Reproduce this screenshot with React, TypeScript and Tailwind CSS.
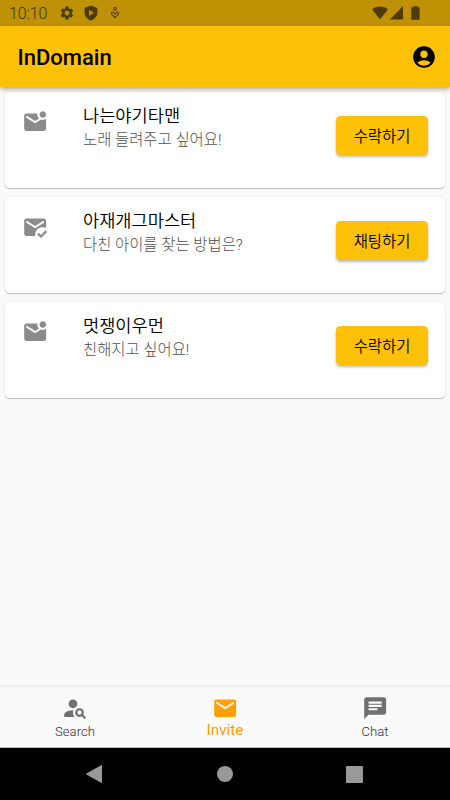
import React from "react";
import {
  MdAccountCircle,
  MdChat,
  MdEmail,
  MdMarkEmailRead,
  MdMarkEmailUnread,
  MdPersonSearch,
  MdSettings,
} from "react-icons/md";

const invites = [
  { name: "나는야기타맨", message: "노래 들려주고 싶어요!", action: "수락하기", read: false },
  { name: "아재개그마스터", message: "다친 아이를 찾는 방법은?", action: "채팅하기", read: true },
  { name: "멋쟁이우먼", message: "친해지고 싶어요!", action: "수락하기", read: false },
];

function StatusBar() {
  return (
    <div className="flex h-[26px] shrink-0 items-center bg-[#bf9105] pl-[9px] pr-[30px] text-[#4d3b05]">
      <span className="w-[39px] whitespace-nowrap pt-[2px] text-[16px] font-light leading-[26px] tracking-[-0.1px] text-[#3d2f04]">10:10</span>
      <MdSettings className="ml-[11px] size-4" />
      <svg className="ml-[9px] h-4 w-[14px]" viewBox="0 0 14 16">
        <path fill="currentColor" fillRule="evenodd" d="M7 .5.6 3v4.500c0 3.700 2.700 6.700 6.400 8 3.700-1.300 6.400-4.300 6.400-8V3L7 .5ZM5 4.700v6L10 7.800 5 4.700Z" />
      </svg>
      <svg className="ml-[12px] h-[14px] w-[10px]" viewBox="0 0 10 14" fill="none" stroke="currentColor" strokeWidth="1.100">
        <circle cx="5" cy="2.800" r="1.300" />
        <path d="M3.200 6.200 5 7.900l1.800-1.700c1.300-.7 2.500.9 1.600 2L5 11.800 1.600 8.200c-.9-1.100.3-2.700 1.600-2Z" />
      </svg>
      <div className="ml-auto flex items-center">
        <svg className="h-[14px] w-4" viewBox="0 0 16 14">
          <path fill="currentColor" d="M8 13.500 0 3.200C4.500-.4 11.500-.4 16 3.200Z" />
        </svg>
        <svg className="ml-[2px] h-[14px] w-[13px]" viewBox="0 0 13 14">
          <path fill="currentColor" d="M13 0v13.500H0Z" />
        </svg>
        <svg className="ml-2 h-[14px] w-[9px]" viewBox="0 0 9 14">
          <path fill="currentColor" d="M2.500 0h4v1.200h1.300c.5 0 .8.300.8.800v11c0 .5-.3.800-.8.800H1.100c-.5 0-.8-.3-.8-.8V2c0-.5.3-.8.8-.8h1.400Z" />
        </svg>
      </div>
    </div>
  );
}

function InviteCard({ name, message, action, read }: (typeof invites)[number]) {
  const Icon = read ? MdMarkEmailRead : MdMarkEmailUnread;
  return (
    <li className="flex h-24 rounded-[4.400px] bg-white pl-[17px] pr-[17px] shadow-[0_1px_1px_rgba(0,0,0,0.22),0_0_2px_rgba(0,0,0,0.10)]">
      <Icon className="mt-[17px] size-[26.300px] shrink-0 text-[#8b8b8b]" />
      <div className="ml-[34.700px] flex-1 whitespace-nowrap pt-3">
        <div className="text-[17.600px] font-[350] leading-6 text-black">{name}</div>
        <div className="text-[15.400px] font-light leading-[24px] text-[#505050]">{message}</div>
      </div>
      <button className="mt-6 h-[39px] w-[92px] rounded-[4.400px] bg-[#ffc107] pt-[3px] text-[15.400px] font-[350] leading-[36px] text-black shadow-[0_2px_3px_rgba(0,0,0,0.28)]">
        {action}
      </button>
    </li>
  );
}

export default function App() {
  return (
    <div className="flex h-[800px] w-[450px] flex-col overflow-hidden bg-[#fafafa] font-['Roboto','Noto_Sans_CJK_KR',sans-serif]">
      <StatusBar />
      <header className="z-10 flex h-[61px] shrink-0 items-center justify-between bg-[#ffc107] pl-[17.500px] pr-[13px] text-black shadow-[0_2px_5px_rgba(0,0,0,0.35)]">
        <h1 className="pt-[2px] text-[22px] font-medium leading-[26px]">InDomain</h1>
        <MdAccountCircle className="size-[26px]" />
      </header>
      <ul className="flex flex-1 flex-col gap-[9px] px-[5px] pt-[5px]">
        {invites.map((invite) => (
          <InviteCard key={invite.name} {...invite} />
        ))}
      </ul>
      <nav className="grid h-[62px] shrink-0 grid-cols-3 border-y border-t-[#f0f0f0] border-b-[#b8b8b8] bg-[#fafafa] text-[#707070] shadow-[0_-1px_1px_rgba(0,0,0,0.03)]">
        <a className="flex flex-col items-center pt-2">
          <MdPersonSearch className="size-[26.300px]" />
          <span className="mt-[3px] text-[13.200px] font-light leading-4 text-[#333]">Search</span>
        </a>
        <a className="flex flex-col items-center pt-2 text-[#ffa000]">
          <MdEmail className="size-[26.300px]" />
          <span className="text-[15.400px] leading-[18px]">Invite</span>
        </a>
        <a className="flex flex-col items-center pt-2">
          <MdChat className="size-[26.300px]" />
          <span className="mt-[3px] text-[13.200px] font-light leading-4 text-[#333]">Chat</span>
        </a>
      </nav>
      <div className="flex h-[52px] shrink-0 items-center bg-black pl-[86px] text-[#999]">
        <svg className="h-[18px] w-4" viewBox="0 0 16 18">
          <path fill="currentColor" d="M16 .7v16.600c0 .6-.4.8-.9.500L.4 9.500c-.5-.3-.5-.7 0-1L15.100.2c.5-.3.9-.1.9.5Z" />
        </svg>
        <span className="ml-[115px] size-4 rounded-full bg-[#999]" />
        <span className="ml-[113px] size-[17px] rounded-[1px] bg-[#999]" />
      </div>
    </div>
  );
}
